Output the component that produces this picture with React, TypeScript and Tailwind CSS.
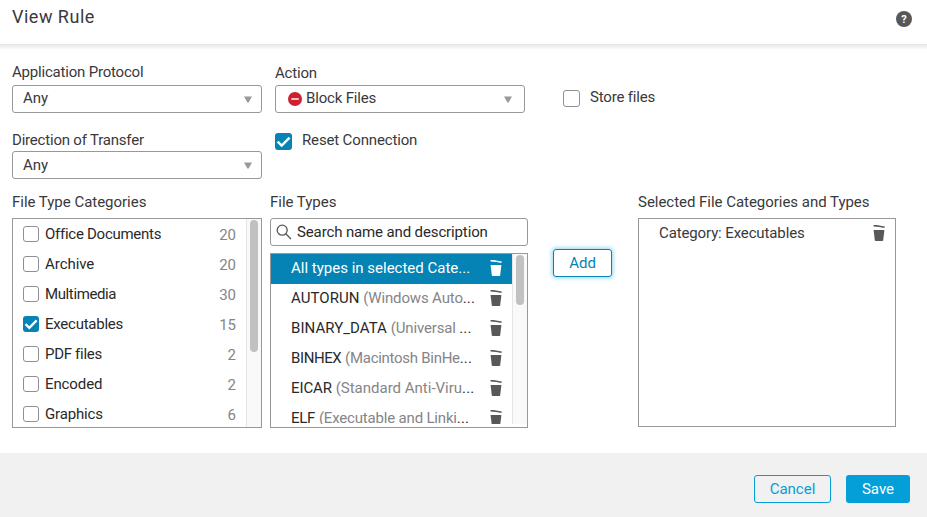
import type { ReactNode } from 'react';

const categories = [
  { name: 'Office Documents', count: 20, track: 'tracking-[-0.27px]' },
  { name: 'Archive', count: 20, track: 'tracking-[-0.05px]' },
  { name: 'Multimedia', count: 30, track: 'tracking-[-0.38px]' },
  { name: 'Executables', count: 15, checked: true, track: 'tracking-[-0.25px]' },
  { name: 'PDF files', count: 2, track: 'tracking-[-0.3px]' },
  { name: 'Encoded', count: 2, track: 'tracking-[-0.1px]' },
  { name: 'Graphics', count: 6, track: 'tracking-[-0.15px]' },
];

const fileTypes = [
  { name: 'AUTORUN', detail: '(Windows Auto', track: 'tracking-[0.05px]', detailTrack: 'tracking-[-0.15px]' },
  { name: 'BINARY_DATA', detail: '(Universal ', track: 'tracking-[0.05px]', detailTrack: 'tracking-[-0.15px]' },
  { name: 'BINHEX', detail: '(Macintosh BinHe', track: 'tracking-[-0.4px]', detailTrack: 'tracking-[-0.28px]' },
  { name: 'EICAR', detail: '(Standard Anti-Viru', track: 'tracking-[-0.1px]', detailTrack: 'tracking-[0px]' },
  { name: 'ELF', detail: '(Executable and Linki', track: 'tracking-[-0.25px]', detailTrack: 'tracking-[-0.18px]' },
];

function Trash({ className = '' }: { className?: string }) {
  return (
    <svg viewBox="0 0 12 16" className={`mb-0.5 h-4 w-3 shrink-0 ${className}`} fill="currentColor">
      <path d="M.6 0C4.500 0 8 .5 11.800 1.600L11.400 3.100C8 2.200 4.500 1.700.5 1.500Z" />
      <path d="M.6 5H11.400L10.200 15.200Q10.100 16 9.300 16H2.700Q1.900 16 1.800 15.200Z" />
    </svg>
  );
}

function Checkbox({ checked, large }: { checked?: boolean; large?: boolean }) {
  const size = large ? 'size-[17px]' : 'size-4';
  if (!checked) return <span className={`${size} shrink-0 rounded-[3px] border border-[#8f9093] bg-white`} />;
  return (
    <span className={`${size} shrink-0 rounded-[3px] bg-[#0483b4]`}>
      <svg viewBox="0 0 16 16" className="block size-full" fill="none" stroke="white" strokeWidth="2.300">
        <path d="M2.500 8.100 6.300 11.800 13.700 4.400" />
      </svg>
    </span>
  );
}

function Select({
  children,
  className = 'pr-[9px] pb-0.5',
  caret = 'mt-[3px]',
}: {
  children: ReactNode;
  className?: string;
  caret?: string;
}) {
  return (
    <div className={`flex h-7 w-[250px] items-center justify-between rounded-[3px] border border-[#98989b] pl-2.5 ${className}`}>
      <span className="flex items-center">{children}</span>
      <svg viewBox="0 0 8 7" className={`h-[7px] w-2 ${caret}`} fill="#98999c">
        <path d="M0 .5H8L4.600 6.400H3.400Z" />
      </svg>
    </div>
  );
}

function Scrollbar({ thumb }: { thumb: string }) {
  return (
    <div className="flex w-[15px] shrink-0 justify-center border-l border-[#e5e5e5] bg-[#f9f9f9] pt-px">
      <div className={`w-2 rounded-full bg-[#c1c1c1] ${thumb}`} />
    </div>
  );
}

export default function App() {
  return (
    <div className="flex h-[517px] w-[927px] flex-col overflow-hidden bg-white font-['Roboto','Liberation_Sans',sans-serif] text-[15px] leading-5 text-[#39393b]">
      <header className="flex h-11 shrink-0 items-start justify-between pt-[7px] pr-[15px] pl-3">
        <h1 className="text-lg leading-5 tracking-[0.5px]">View Rule</h1>
        <span className="mt-1 flex size-4 items-center justify-center rounded-full bg-[#58585b] text-[11px] leading-none font-bold text-white">?</span>
      </header>
      <div className="h-1.5 shrink-0 bg-linear-to-b from-[#e5e5e5] to-white" />

      <main className="flex h-[403px] shrink-0 flex-col pl-3">
        <section className="flex h-[142px]">
          <div className="w-[263px] pt-3">
            <div className="h-[23px] tracking-[-0.2px]">Application Protocol</div>
            <Select>Any</Select>
            <div className="mt-[17px] h-[21px] tracking-[-0.2px]">Direction of Transfer</div>
            <Select className="pr-[9px]" caret="mt-px">Any</Select>
          </div>
          <div className="w-[288px] pt-[13px]">
            <div className="h-[22px] tracking-[-0.2px]">Action</div>
            <Select className="pr-3 pb-0.5">
              <svg viewBox="0 0 14 14" className="mt-0.5 mr-1 ml-0.5 size-3.5">
                <circle cx="7" cy="7" r="7" fill="#cf2030" />
                <path d="M3.200 7H10.800" stroke="#f7dfe1" strokeWidth="1.700" />
              </svg>
              <span className="tracking-[-0.18px]">Block Files</span>
            </Select>
            <div className="mt-[17px] flex items-start">
              <span className="mt-[3px] flex"><Checkbox checked large /></span>
              <span className="ml-2.5 tracking-[-0.15px]">Reset Connection</span>
            </div>
          </div>
          <div className="flex items-start pt-[37px]">
            <span className="mt-[3px] flex"><Checkbox large /></span>
            <span className="ml-2.5 tracking-[-0.18px]">Store files</span>
          </div>
        </section>

        <section className="flex">
          <div className="mr-2 w-[250px]">
            <div className="h-[26px] tracking-[-0.02px]">File Type Categories</div>
            <div className="flex h-[210px] overflow-hidden border border-[#98989b]">
              <ul className="min-w-0 flex-1">
                {categories.map((item) => (
                  <li key={item.name} className="flex h-[30px] items-center pr-2.5 pl-2.5">
                    <Checkbox checked={item.checked} />
                    <span className={`ml-1.5 flex-1 text-[#29292b] ${item.track}`}>{item.name}</span>
                    <span className="mt-0.5 text-[#858588]">{item.count}</span>
                  </li>
                ))}
              </ul>
              <Scrollbar thumb="h-[132px]" />
            </div>
          </div>

          <div className="w-[258px]">
            <div className="h-[26px] tracking-[-0.02px]">File Types</div>
            <div className="flex h-7 items-center rounded-[3px] border border-[#98989b] pl-[5px] text-[#29292b]">
              <svg viewBox="0 0 16 16" className="mr-[5px] size-4" fill="none" stroke="#58585b" strokeWidth="1.300">
                <circle cx="6.200" cy="6.200" r="5" />
                <path d="M9.800 9.800 15 15" />
              </svg>
              <span className="tracking-[-0.13px]">Search name and description</span>
            </div>
            <div className="mt-[7px] h-[175px] border border-[#98989b] pb-[3px]">
              <div className="flex h-full overflow-hidden">
                <ul className="min-w-0 flex-1">
                  <li className="flex h-[30px] items-center justify-between bg-[#0483b4] pr-2.5 pl-5 text-white">
                    <span className="pb-0.5">All types in selected Cate...</span>
                    <Trash />
                  </li>
                  {fileTypes.map((item) => (
                    <li key={item.name} className="flex h-[30px] items-center justify-between pr-2.5 pl-5">
                      <span className="pb-0.5 whitespace-pre text-[#29292b]">
                        <span className={item.track}>{item.name}</span>{' '}
                        <span className={`text-[#858588] ${item.detailTrack}`}>{item.detail}</span>
                        <span className="tracking-[0.1px]">...</span>
                      </span>
                      <Trash className="text-[#58585b]" />
                    </li>
                  ))}
                </ul>
                <Scrollbar thumb="h-[50px]" />
              </div>
            </div>
          </div>

          <button className="mt-[57px] ml-[25px] h-7 w-[59px] rounded-[3px] border border-[#0483b4] text-[#0483b4] shadow-[0_0_4px_1px_#8fd3ef]">Add</button>

          <div className="ml-[26px] w-[258px]">
            <div className="h-[26px] tracking-[-0.03px]">Selected File Categories and Types</div>
            <div className="h-[209px] border border-[#98989b]">
              <div className="flex h-[30px] items-center justify-between pr-2.5 pl-5">
                <span className="pb-0.5 tracking-[-0.12px]">Category: Executables</span>
                <Trash className="text-[#58585b]" />
              </div>
            </div>
          </div>
        </section>
      </main>

      <footer className="flex h-16 items-start justify-end gap-[15px] bg-[#f1f1f1] pt-[22px] pr-[17px]">
        <button className="h-7 w-[77px] rounded-[3px] border border-[#049fd9] text-[#049fd9]">Cancel</button>
        <button className="h-7 w-16 rounded-[3px] bg-[#049fd9] text-white">Save</button>
      </footer>
    </div>
  );
}
